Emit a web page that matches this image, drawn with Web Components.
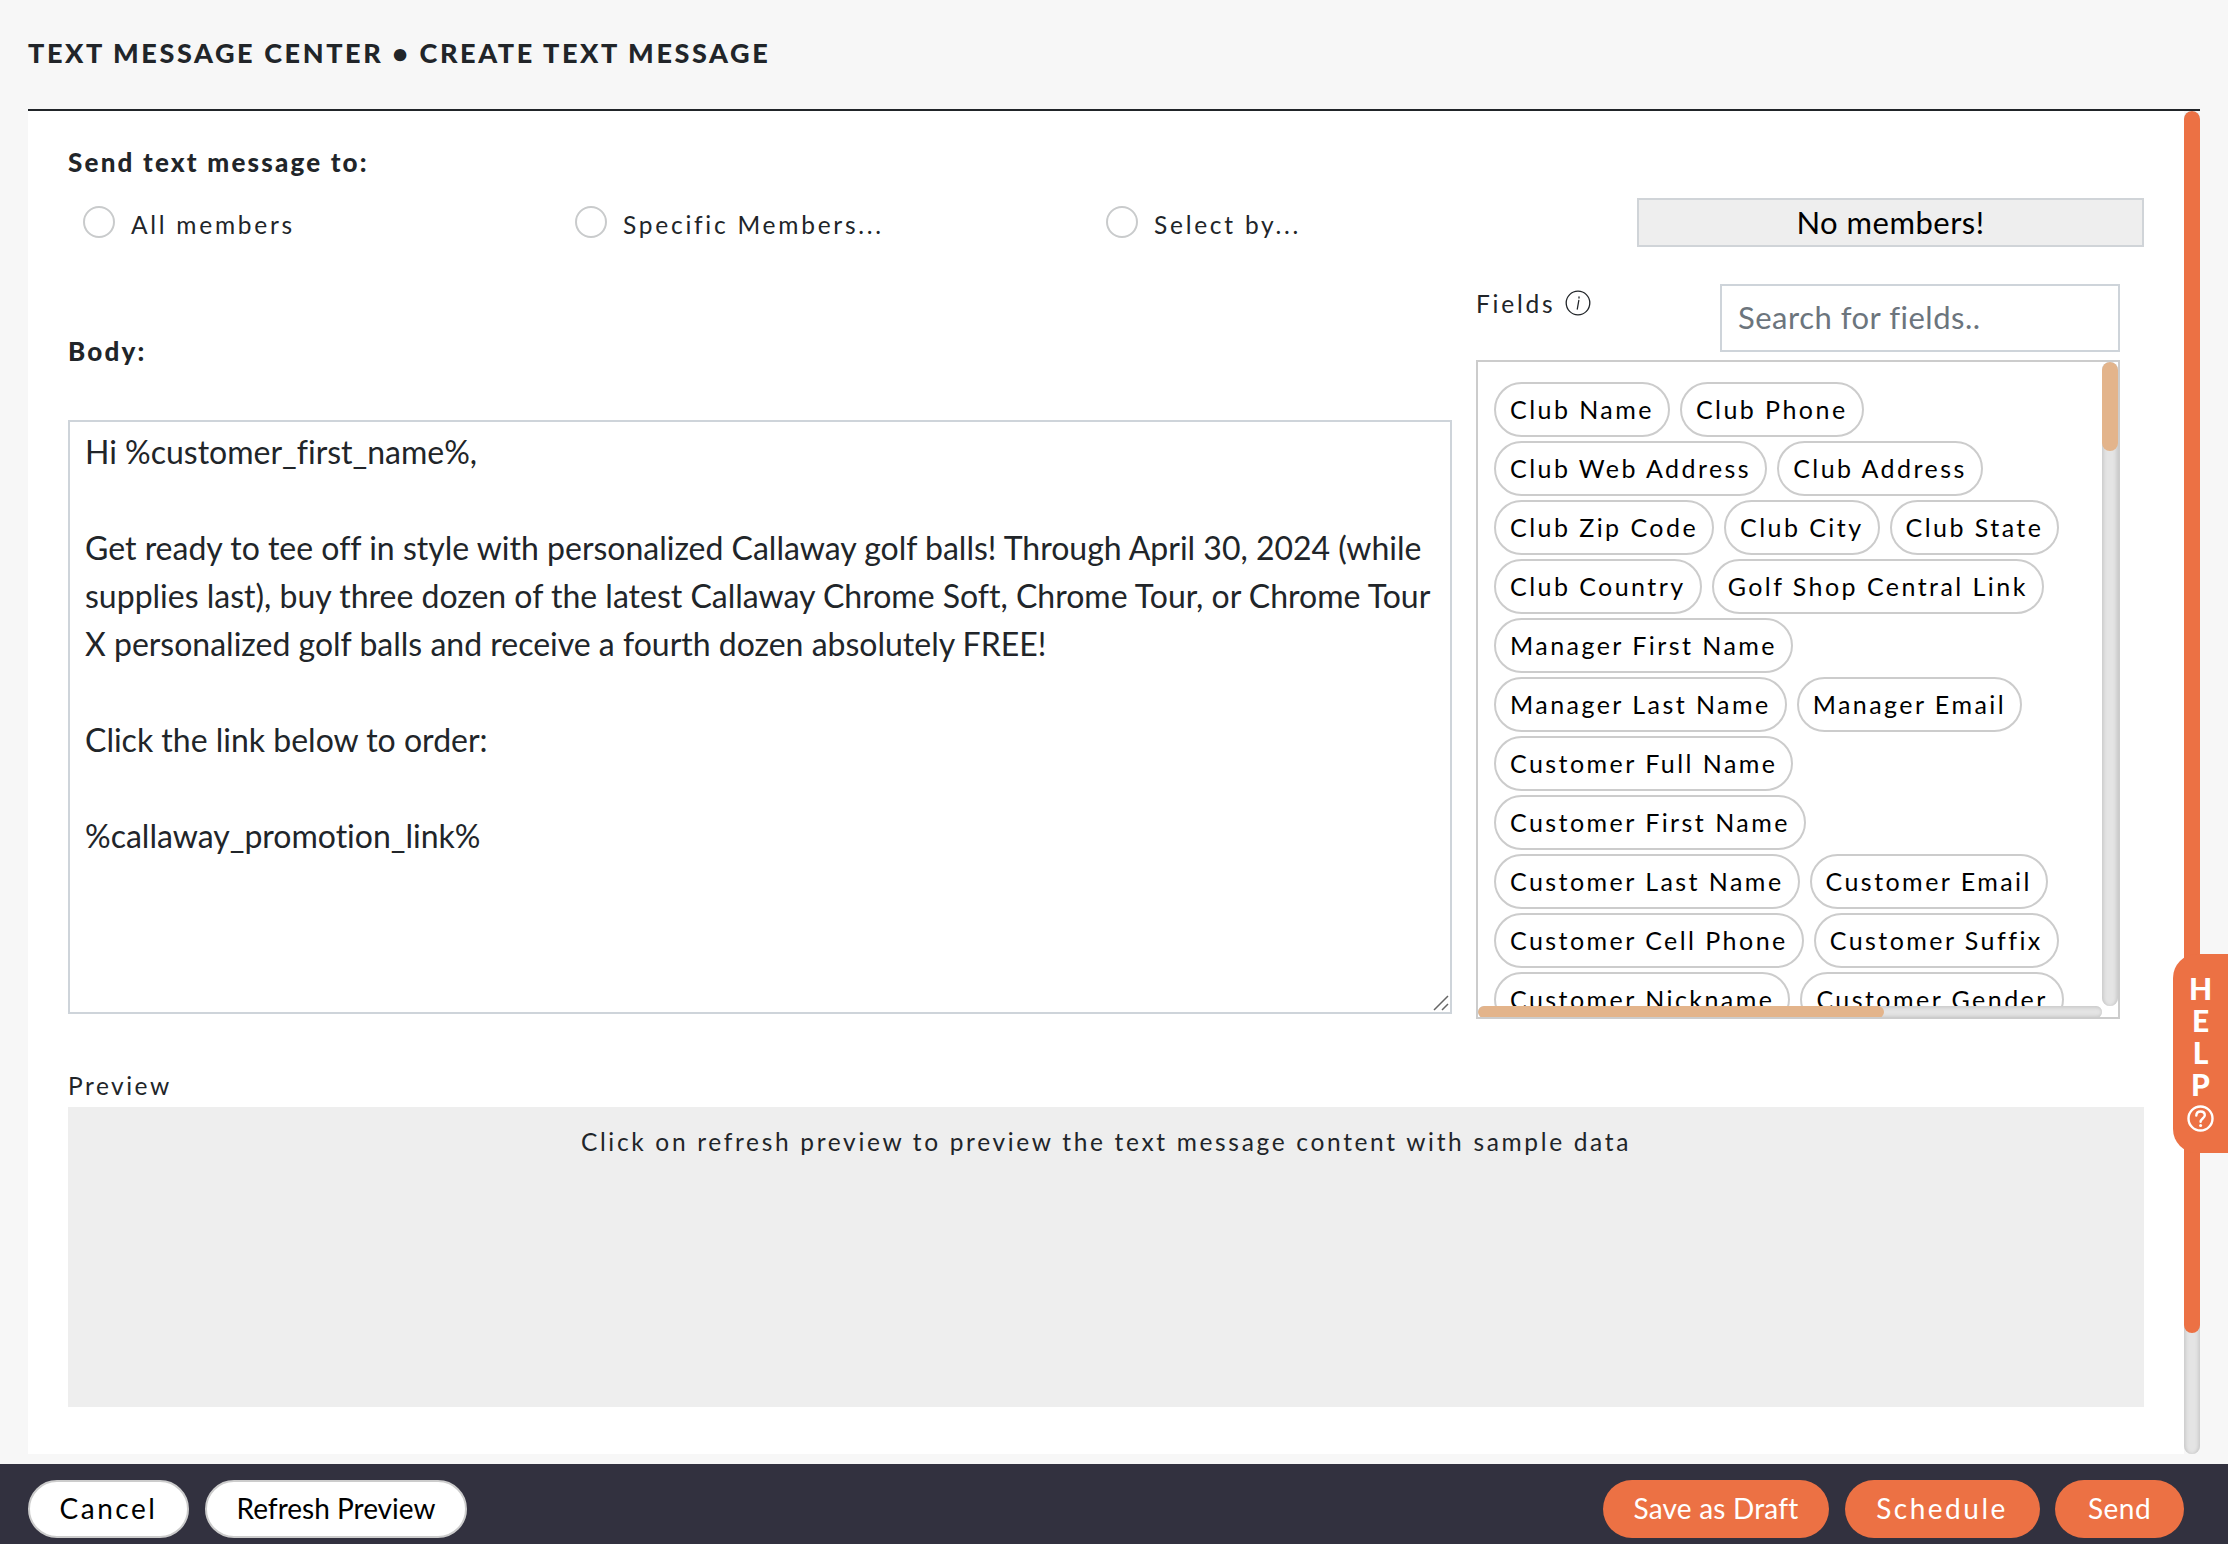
<!DOCTYPE html>
<html lang="en"><head><meta charset="utf-8"><title>Create Text Message</title>
<style>
html,body{margin:0;height:100%;overflow:hidden;background:#f7f7f7}
body{font-family:Lato,"Liberation Sans",sans-serif;color:#212529}
</style></head><body>
<tm-app>
  <tm-radio slot="radios">All members</tm-radio>
  <tm-radio slot="radios">Specific Members...</tm-radio>
  <tm-radio slot="radios">Select by...</tm-radio>
  <tm-chip slot="chips">Club Name</tm-chip><tm-chip slot="chips">Club Phone</tm-chip>
  <tm-chip slot="chips">Club Web Address</tm-chip><tm-chip slot="chips">Club Address</tm-chip>
  <tm-chip slot="chips">Club Zip Code</tm-chip><tm-chip slot="chips">Club City</tm-chip><tm-chip slot="chips">Club State</tm-chip>
  <tm-chip slot="chips">Club Country</tm-chip><tm-chip slot="chips">Golf Shop Central Link</tm-chip>
  <tm-chip slot="chips">Manager First Name</tm-chip>
  <tm-chip slot="chips">Manager Last Name</tm-chip><tm-chip slot="chips">Manager Email</tm-chip>
  <tm-chip slot="chips">Customer Full Name</tm-chip>
  <tm-chip slot="chips">Customer First Name</tm-chip>
  <tm-chip slot="chips">Customer Last Name</tm-chip><tm-chip slot="chips">Customer Email</tm-chip>
  <tm-chip slot="chips">Customer Cell Phone</tm-chip><tm-chip slot="chips">Customer Suffix</tm-chip>
  <tm-chip slot="chips">Customer Nickname</tm-chip><tm-chip slot="chips">Customer Gender</tm-chip>
  <tm-btn slot="left" variant="light" style="--w:161px;--ls:2.5px">Cancel</tm-btn>
  <tm-btn slot="left" variant="light" style="--w:262px;--ls:0">Refresh Preview</tm-btn>
  <tm-btn slot="right" style="--w:226px;--ls:0.2px">Save as Draft</tm-btn>
  <tm-btn slot="right" style="--w:195px;--ls:2.5px">Schedule</tm-btn>
  <tm-btn slot="right" style="--w:129px;--ls:0.5px">Send</tm-btn>
</tm-app>
<script>
function def(name, css, html){
  customElements.define(name, class extends HTMLElement{
    constructor(){super();const r=this.attachShadow({mode:'open'});r.innerHTML='<style>'+css+'</style>'+html;}
  });
}
def('tm-radio',`
:host{display:flex;align-items:center;gap:16px;height:49px;font-size:24.5px;letter-spacing:2.75px;color:#212529}
i{display:block;width:32px;height:32px;box-sizing:border-box;border:2px solid #c9cbcc;border-radius:50%;margin-top:-2px}
span{position:relative;top:2px}
`,`<i></i><span><slot></slot></span>`);
def('tm-chip',`
:host{display:inline-flex;align-items:center;box-sizing:border-box;height:55px;padding:0 14px 2px 14px;border:2px solid #ccc;border-radius:28px;background:#fff;color:#000;font-size:25px;letter-spacing:2.45px;white-space:nowrap}
`,`<slot></slot>`);
def('tm-btn',`
:host{display:flex;align-items:center;justify-content:center;box-sizing:border-box;width:var(--w);height:58px;padding-bottom:2px;border-radius:29px;font-size:28px;letter-spacing:var(--ls,0);background:#ec7144;color:#fff;white-space:nowrap}
:host([variant=light]){background:#fff;color:#000;border:2px solid #ccc}
`,`<slot></slot>`);
def('tm-scrollbar',`
:host{display:block;border-radius:8px;background:#e4e4e4;box-shadow:inset 3px 0 3px -1px #ccc,inset -3px 0 3px -1px #ccc;position:relative;overflow:hidden}
:host([h]){box-shadow:inset 0 3px 3px -1px #ccc,inset 0 -3px 3px -1px #ccc}
b{display:block;position:absolute;left:0;top:0;width:var(--tw,100%);height:var(--th,100%);background:var(--tc,#ec7144);border-radius:8px}
`,`<b></b>`);
def('tm-help',`
:host{position:absolute;right:0;top:954px;width:55px;height:199px;box-sizing:border-box;padding-top:18px;background:#ec7144;border-radius:24px 0 0 24px;display:flex;flex-direction:column;align-items:center;color:#fff;font-size:30px;font-weight:900;line-height:32px}
span{display:block;height:32px}
svg{display:block;margin-top:5px}
`,`<span>H</span><span>E</span><span>L</span><span>P</span>
<svg width="27" height="27" viewBox="0 0 27 27" fill="none" stroke="#fff" stroke-width="2.4"><circle cx="13.5" cy="13.5" r="12"/><path d="M9.3 10.6c.1-2.6 1.9-4.1 4.3-4.1 2.500 0 4.200 1.500 4.200 3.700 0 3.200-4.200 3.300-4.200 6.600" stroke-linecap="round"/><circle cx="13.600" cy="20.500" r="1.500" fill="#fff" stroke="none"/></svg>`);
def('tm-app',`
:host{display:flex;flex-direction:column;height:1544px;width:2228px;position:relative;overflow:hidden;background:#f7f7f7}
*{box-sizing:border-box}
header{margin:0 28px;height:111px;border-bottom:2px solid #212529;flex:none;display:flex;align-items:center;padding-bottom:3px}
h1{margin:0;font-size:27px;font-weight:900;letter-spacing:2.6px;color:#212529;line-height:36px}
.main{margin:0 28px;height:1343px;flex:none;display:flex}
.panel{flex:1;background:#fff;padding:33px 40px 0}
.lab{font-size:26px;font-weight:900;letter-spacing:2.2px;line-height:36px}
.radios{display:grid;grid-template-columns:492px 531px 531px 1fr;padding-left:15px;margin-top:18px}
.none{box-sizing:border-box;height:49px;padding-bottom:2px;background:#eee;border:2px solid #d0d4d8;color:#000;font-size:31px;letter-spacing:.5px;display:flex;align-items:center;justify-content:center}
.body{display:grid;grid-template-columns:1384px 644px;gap:24px;margin-top:37px}
.left .lab{margin-top:49px}
.ta{margin-top:51px;height:594px;border:2px solid #ced4da;padding:6px 15px;font-size:32px;font-variant-ligatures:none;line-height:48px;white-space:nowrap;position:relative;color:#212529}
.ta svg{position:absolute;right:1px;bottom:1px}
.fhead{display:flex;height:68px}
.flab{width:244px;display:flex;align-items:center;gap:9px;height:38px;font-size:24.500px;letter-spacing:2.800px;color:#212529}
.search{flex:1;border:2px solid #ced4da;color:#6c757d;font-size:31px;letter-spacing:.5px;display:flex;align-items:center;padding:0 16px 2px}
.fbox{margin-top:8px;height:659px;border:2px solid #ccc;position:relative;overflow:hidden}
.chips{width:602px;padding:20px 0 0 16px;display:flex;flex-wrap:wrap;gap:4px 10px;align-content:flex-start}
tm-scrollbar.v{position:absolute;left:624px;top:0;width:16px;height:644px;--th:89px;--tc:#e3b48b}
tm-scrollbar.h{position:absolute;left:0;top:644px;width:624px;height:12px;--tw:406px;--tc:#e3b48b}
.pv{margin-top:49px;font-size:24.5px;letter-spacing:2.5px;font-weight:400}
.pbox{margin-top:3px;height:300px;background:#eee;text-align:center;padding-top:17px;font-size:24.500px;letter-spacing:2.670px;line-height:36px;color:#212529}
tm-scrollbar.page{width:16px;height:1343px;--th:1222px;flex:none}
footer{margin-top:10px;height:80px;background:#32313f;display:flex;justify-content:space-between;padding:16px 44px 0 28px;flex:none}
.g{display:flex;gap:16px}
.g.r{gap:15.5px}
`,`
<header><h1>TEXT MESSAGE CENTER • CREATE TEXT MESSAGE</h1></header>
<div class="main">
  <div class="panel">
    <div class="lab">Send text message to:</div>
    <div class="radios"><slot name="radios"></slot><div class="none">No members!</div></div>
    <div class="body">
      <div class="left">
        <div class="lab">Body:</div>
        <div class="ta">Hi %customer_first_name%,<br><br>Get ready to tee off in style with personalized Callaway golf balls! Through April 30, 2024 (while<br>supplies last), buy three dozen of the latest Callaway Chrome Soft, Chrome Tour, or Chrome Tour<br>X personalized golf balls and receive a fourth dozen absolutely FREE!<br><br>Click the link below to order:<br><br>%callaway_promotion_link%
          <svg width="16" height="16" viewBox="0 0 16 16" stroke="#666" stroke-width="1.500"><path d="M1 15 15 1M9 15l6-6"/></svg>
        </div>
      </div>
      <div class="right">
        <div class="fhead">
          <div class="flab">Fields <svg width="26" height="26" viewBox="0 0 26 26" fill="none" stroke="#212529" stroke-width="1.300"><circle cx="13" cy="13" r="11.800"/><path d="M13.800 10.500 12.300 19M14 6.800v1.200" stroke-linecap="round"/></svg></div>
          <div class="search">Search for fields..</div>
        </div>
        <div class="fbox">
          <div class="chips"><slot name="chips"></slot></div>
          <tm-scrollbar class="v"></tm-scrollbar>
          <tm-scrollbar class="h" h></tm-scrollbar>
        </div>
      </div>
    </div>
    <div class="lab pv">Preview</div>
    <div class="pbox">Click on refresh preview to preview the text message content with sample data</div>
  </div>
  <tm-scrollbar class="page"></tm-scrollbar>
</div>
<footer><div class="g"><slot name="left"></slot></div><div class="g r"><slot name="right"></slot></div></footer>
<tm-help></tm-help>
`);
</script>
</body></html>
